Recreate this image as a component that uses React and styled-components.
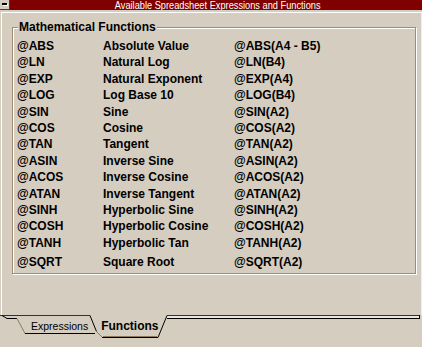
import React from "react";
import styled, { createGlobalStyle } from "styled-components";

const BG = "#d5cdbf";
const SHADOW = "#a28d68";

const Global = createGlobalStyle`
  html, body { margin: 0; padding: 0; background: ${BG}; }
  body { font-family: "Liberation Sans", Arial, sans-serif; }
`;

const Window = styled.div`
  width: 422px;
  height: 347px;
  background: ${BG};
  display: flex;
  flex-direction: column;
  overflow: hidden;
  color: #000;
  font-family: "Liberation Sans", Arial, sans-serif;
`;

const TitleBar = styled.div`
  height: 10px;
  flex: none;
  background: #800000;
  display: flex;
  align-items: center;
  overflow: hidden;
`;

const SysButton = styled.div`
  width: 10px;
  height: 10px;
  flex: none;
  box-sizing: border-box;
  background: ${BG};
  border-right: 1px solid #404040;
  border-bottom: 1px solid #404040;
  position: relative;
  &::after {
    content: "";
    position: absolute;
    left: 2px;
    top: 3px;
    width: 5px;
    height: 2px;
    background: #000;
    box-shadow: 1px 1px 0 #fff;
  }
`;

const Title = styled.div`
  flex: 1;
  text-align: center;
  padding-left: 4px;
  color: #fff;
  font-family: "Liberation Sans", Arial, sans-serif;
  font-size: 11px;
  line-height: 10px;
  white-space: nowrap;
  transform: scaleX(0.84);
`;

const Page = styled.div`
  margin: 2px 0 0 1px;
  height: 303px;
  box-sizing: border-box;
  border-top: 1px solid #fff;
  border-left: 1px solid #fff;
  border-right: 1px solid #f2eee6;
  padding: 14px 0 0 10px;
`;

const Group = styled.div`
  position: relative;
  width: 404px;
  height: 247px;
  box-sizing: border-box;
  border: 1px solid ${SHADOW};
  box-shadow: inset 1px 1px 0 #fff, 1px 1px 0 #fff;
  padding: 10px 0 0 4px;
`;

const Legend = styled.span`
  position: absolute;
  top: -8px;
  left: 5px;
  padding: 0 1px;
  background: ${BG};
  font-weight: bold;
  font-size: 12px;
  line-height: 14px;
`;

const Row = styled.div`
  display: grid;
  grid-template-columns: 86px 131px 1fr;
  height: 16.4px;
  line-height: 16.4px;
  margin-top: ${(p) => (p.$gap ? "3px" : "0")};
  font-weight: bold;
  font-size: 12px;
  white-space: nowrap;
`;

const Cell = styled.span``;

const TabBar = styled.div`
  position: relative;
  height: 32px;
  box-sizing: border-box;
  padding-top: 4px;
`;

const TabArt = styled.svg`
  position: absolute;
  left: 0;
  top: 0;
`;

const TabRow = styled.div`
  position: relative;
  display: flex;
  align-items: baseline;
  gap: 13px;
  padding-left: 31px;
  line-height: 14px;
`;

const TabLabel = styled.span`
  font-size: ${(p) => (p.$active ? "12px" : "10.5px")};
  font-weight: ${(p) => (p.$active ? "bold" : "normal")};
`;

const rows = [
  ["@ABS", "Absolute Value", "@ABS(A4 - B5)"],
  ["@LN", "Natural Log", "@LN(B4)"],
  ["@EXP", "Natural Exponent", "@EXP(A4)"],
  ["@LOG", "Log Base 10", "@LOG(B4)"],
  ["@SIN", "Sine", "@SIN(A2)"],
  ["@COS", "Cosine", "@COS(A2)"],
  ["@TAN", "Tangent", "@TAN(A2)"],
  ["@ASIN", "Inverse Sine", "@ASIN(A2)"],
  ["@ACOS", "Inverse Cosine", "@ACOS(A2)"],
  ["@ATAN", "Inverse Tangent", "@ATAN(A2)"],
  ["@SINH", "Hyperbolic Sine", "@SINH(A2)"],
  ["@COSH", "Hyperbolic Cosine", "@COSH(A2)"],
  ["@TANH", "Hyperbolic Tan", "@TANH(A2)"],
  ["@SQRT", "Square Root", "@SQRT(A2)", true],
];

function TabOutline() {
  const dark = "#3a3224";
  const tan = "#8c7a58";
  return (
    <TabArt width="422" height="32" viewBox="0 0 422 32">
      <rect x="167" y="1" width="252" height="2" fill="#ece6da" />
      <path d="M0 0.5H90" stroke={dark} fill="none" shapeRendering="crispEdges" />
      <path d="M167 0.5H420" stroke={dark} fill="none" shapeRendering="crispEdges" />
      <path d="M167 3.5H419.5V0" stroke="#000" fill="none" shapeRendering="crispEdges" />
      <path d="M2 0.5L7 3.5H17" stroke="#000" fill="none" />
      <path d="M17 3.5L25 18.5" stroke={tan} fill="none" />
      <path d="M25 18.5H95" stroke="#000" fill="none" shapeRendering="crispEdges" />
      <path d="M90 0.5L96.5 16.5" stroke="#000" fill="none" />
      <path d="M96.5 16.5L102 22" stroke={tan} fill="none" />
      <path d="M103 21.5H157" stroke={tan} fill="none" shapeRendering="crispEdges" />
      <path d="M102 22.5H158" stroke="#000" fill="none" shapeRendering="crispEdges" />
      <path d="M158 22.5L167 0.5" stroke="#000" fill="none" />
    </TabArt>
  );
}

export default function App() {
  return (
    <Window>
      <Global />
      <TitleBar>
        <SysButton />
        <Title>Available Spreadsheet Expressions and Functions</Title>
      </TitleBar>
      <Page>
        <Group>
          <Legend>Mathematical Functions</Legend>
          {rows.map(([fn, desc, ex, gap]) => (
            <Row key={fn} $gap={gap}>
              <Cell>{fn}</Cell>
              <Cell>{desc}</Cell>
              <Cell>{ex}</Cell>
            </Row>
          ))}
        </Group>
      </Page>
      <TabBar>
        <TabOutline />
        <TabRow>
          <TabLabel>Expressions</TabLabel>
          <TabLabel $active>Functions</TabLabel>
        </TabRow>
      </TabBar>
    </Window>
  );
}
